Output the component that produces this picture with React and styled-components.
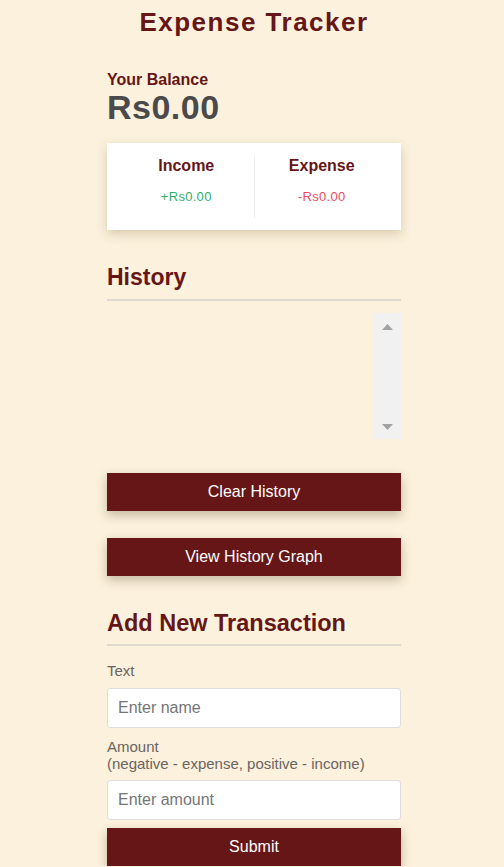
import styled, { createGlobalStyle } from "styled-components";

const GlobalStyle = createGlobalStyle`
  * {
    box-sizing: border-box;
  }
  body {
    margin: 0;
    padding: 0 0 0 4px;
    background-color: #fbf1dc;
    font-family: "Liberation Sans", Arial, sans-serif;
  }
`;

const Container = styled.div`
  width: 294px;
  margin: 0 auto;
`;

const Title = styled.h2`
  margin: 0;
  padding-top: 7px;
  text-align: center;
  font-size: 26px;
  letter-spacing: 1.5px;
  color: #661616;
`;

const BalanceLabel = styled.h4`
  margin: 33px 0 0;
  font-size: 16px;
  color: #661616;
`;

const Balance = styled.h1`
  margin: -2px 0 0;
  font-size: 34px;
  line-height: 40px;
  letter-spacing: 0.5px;
  color: #4a4a4a;
`;

const Card = styled.div`
  display: flex;
  margin-top: 16px;
  padding: 12px;
  background-color: #fff;
  box-shadow: 0 4px 10px rgba(120, 90, 40, 0.25);
`;

const Column = styled.div`
  flex: 1;
  text-align: center;
  padding: 1px 0 14px;
  & + & {
    border-left: 1px solid #eee;
  }
`;

const ColumnTitle = styled.h4`
  margin: 0;
  font-size: 16px;
  line-height: 20px;
  color: #661616;
`;

const Money = styled.p`
  margin: 13px 0 0;
  font-size: 13px;
  letter-spacing: 0.3px;
  color: ${(p) => (p.$minus ? "#ec4c5c" : "#2eae6a")};
`;

const SectionTitle = styled.h3`
  margin: ${(p) => p.$top} 0 12px;
  padding-bottom: ${(p) => p.$pad || "9px"};
  border-bottom: 2px solid #ddd9d0;
  font-size: ${(p) => p.$size || "23px"};
  line-height: 26px;
  color: #661616;
`;

const List = styled.div`
  display: flex;
  justify-content: flex-end;
  height: 126px;
  margin-bottom: 34px;
`;

const ScrollTrack = styled.div`
  display: flex;
  flex-direction: column;
  justify-content: space-between;
  align-items: center;
  width: 28px;
  padding: 11px 0 9px;
  background-color: #f1f1f1;
`;

const Button = styled.button`
  display: block;
  width: 100%;
  height: 38px;
  margin: ${(p) => p.$top || "0"} 0 ${(p) => p.$gap || "0"};
  border: none;
  background-color: #661616;
  color: #fff;
  font-family: inherit;
  font-size: 16px;
  box-shadow: 0 4px 10px rgba(80, 50, 20, 0.3);
  cursor: pointer;
`;

const Label = styled.label`
  display: block;
  margin: ${(p) => p.$top || "0"} 0 ${(p) => p.$gap || "9px"};
  font-size: 15px;
  line-height: 17px;
  color: #6b6460;
`;

const Input = styled.input`
  display: block;
  width: 100%;
  height: 40px;
  padding: 10px;
  border: 1px solid #dedede;
  border-radius: 3px;
  font-family: inherit;
  font-size: 16px;
  &::placeholder {
    color: #757575;
  }
`;

function Arrow({ down }) {
  return (
    <svg width="11" height="6" viewBox="0 0 11 6">
      <polygon points={down ? "0,0 11,0 5.5,6" : "0,6 11,6 5.5,0"} fill="#a3a3a3" />
    </svg>
  );
}

export default function App() {
  return (
    <>
      <GlobalStyle />
      <Container>
        <Title>Expense Tracker</Title>
        <BalanceLabel>Your Balance</BalanceLabel>
        <Balance>Rs0.00</Balance>
        <Card>
          <Column>
            <ColumnTitle>Income</ColumnTitle>
            <Money>+Rs0.00</Money>
          </Column>
          <Column>
            <ColumnTitle>Expense</ColumnTitle>
            <Money $minus>-Rs0.00</Money>
          </Column>
        </Card>
        <SectionTitle $top="34px">History</SectionTitle>
        <List>
          <ScrollTrack>
            <Arrow />
            <Arrow down />
          </ScrollTrack>
        </List>
        <Button $gap="27px">Clear History</Button>
        <Button>View History Graph</Button>
        <SectionTitle $top="34px" $size="23.5px" $pad="8px">
          Add New Transaction
        </SectionTitle>
        <Label $top="16px">Text</Label>
        <Input placeholder="Enter name" />
        <Label $top="10px" $gap="8px">
          Amount
          <br />
          (negative - expense, positive - income)
        </Label>
        <Input placeholder="Enter amount" />
        <Button $top="8px">Submit</Button>
      </Container>
    </>
  );
}
